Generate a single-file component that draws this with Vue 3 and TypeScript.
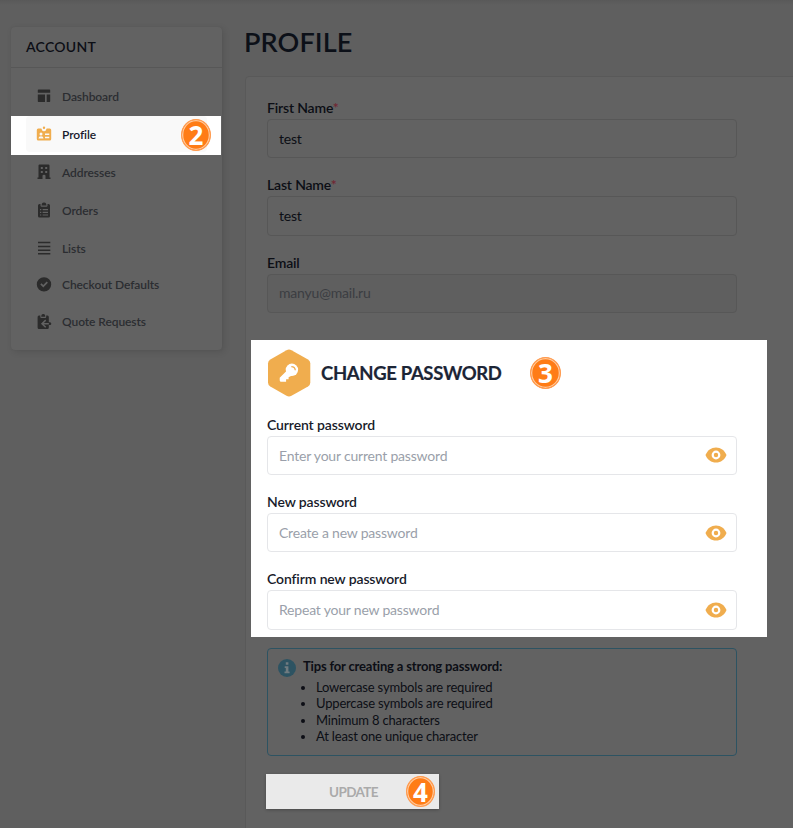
<script setup lang="ts">
interface NavItem { label: string; icon: string; active?: boolean }
interface Field { label: string; value?: string; hint?: string; required?: boolean; disabled?: boolean }

const nav: NavItem[] = [
  { label: 'Dashboard', icon: 'dashboard' },
  { label: 'Profile', icon: 'profile', active: true },
  { label: 'Addresses', icon: 'building' },
  { label: 'Orders', icon: 'orders' },
  { label: 'Lists', icon: 'lists' },
  { label: 'Checkout Defaults', icon: 'check' },
  { label: 'Quote Requests', icon: 'quote' },
]
const details: Field[] = [
  { label: 'First Name', value: 'test', required: true },
  { label: 'Last Name', value: 'test', required: true },
  { label: 'Email', value: 'manyu@mail.ru', disabled: true },
]
const passwords: Field[] = [
  { label: 'Current password', hint: 'Enter your current password' },
  { label: 'New password', hint: 'Create a new password' },
  { label: 'Confirm new password', hint: 'Repeat your new password' },
]
const tips: string[] = [
  'Lowercase symbols are required',
  'Uppercase symbols are required',
  'Minimum 8 characters',
  'At least one unique character',
]
</script>

<template>
  <div class="page">
    <aside class="sidebar">
      <h2 class="side-title">ACCOUNT</h2>
      <nav class="nav">
        <div v-for="item in nav" :key="item.label" class="nav-item" :class="[{ active: item.active }, item.icon]">
          <div class="nav-inner">
            <svg class="nav-icon" viewBox="0 0 16 16" width="16" height="16" fill="currentColor">
              <path v-if="item.icon === 'dashboard'" d="M2.500 1.500h11a.7.7 0 0 1 .7.7v2.500H1.800V2.200a.7.7 0 0 1 .7-.7zM1.800 6.500h7.200v7.500H2.500a.7.7 0 0 1-.7-.7zM10.700 6.500h3.500v6.800a.7.7 0 0 1-.7.7h-2.800z" />
              <path v-else-if="item.icon === 'profile'" fill-rule="evenodd" d="M2.200 2.500H5.300Q6 5.200 8 5.200Q10 5.200 10.700 2.500H13.800Q15.200 2.500 15.200 4V13Q15.200 14.500 13.800 14.500H2.200Q.8 14.500 .8 13V4Q.8 2.500 2.200 2.500zM5 6.500a1.500 1.500 0 1 0 0 3a1.500 1.500 0 1 0 0-3zM2.500 12.500H7.500Q7.500 10.300 5 10.300T2.500 12.500zM9 7.500V9H13.300V7.500zM9 10.800V12.300H13.300V10.800zM8 .5a1.200 1.200 0 1 1 0 2.400A1.200 1.200 0 1 1 8 .5z" />
              <path v-else-if="item.icon === 'building'" fill-rule="evenodd" d="M3.600 .5H12.400Q13.500 .5 13.500 1.600V13.500H14.500V15H9.500V11.800Q9.500 10.800 8 10.800T6.500 11.800V15H1.500V13.500H2.500V1.600Q2.500 .5 3.600 .5zM4.800 3V5H6.800V3zM9.200 3V5H11.200V3zM4.800 7V9H6.800V7zM9.200 7V9H11.200V7z" />
              <path v-else-if="item.icon === 'orders'" fill-rule="evenodd" d="M3.500 2H4.500V3.500Q4.500 4.700 5.700 4.700H10.300Q11.500 4.700 11.500 3.500V2H12.500Q14 2 14 3.500V14Q14 15.500 12.500 15.500H3.500Q2 15.500 2 14V3.500Q2 2 3.500 2zM6 1.500Q6.500 .5 8 .5T10 1.500L10.500 3.500H5.500zM4 7V8.200H5.300V7zM6.600 7V8.200H12V7zM4 9.700V10.900H5.300V9.700zM6.600 9.700V10.900H12V9.700zM4 12.400V13.600H5.300V12.400zM6.600 12.400V13.600H12V12.400z" />
              <path v-else-if="item.icon === 'lists'" d="M2 1.800h12.300v1.500H2zM2 5.700h12.300v1.500H2zM2 9.400h12.300v1.500H2zM2 13.100h12.300v1.500H2z" />
              <path v-else-if="item.icon === 'check'" fill-rule="evenodd" d="M8 .2a7.200 7.200 0 1 0 0 14.400A7.200 7.200 0 1 0 8 .2zM4.300 7.400L5.500 6.200L7.300 8L10.700 4.600L11.900 5.800L7.300 10.400z" />
              <template v-else>
                <path d="M3 1.500H4.300V3Q4.300 4 5.300 4H9.200Q10.200 4 10.200 3V1.500H11.500Q12.800 1.500 12.800 3V13.500Q12.800 15 11.500 15H3Q1.600 15 1.600 13.500V3Q1.600 1.500 3 1.500zM5.500 1Q6 0 7.300 0T9 1L9.300 2.800H5.200zM12.800 8.300H14Q15.300 8.500 15.300 9.700T14 11H12.800z" />
                <path d="M9.700 6.100L6 9.700L9.700 13.300M6 9.700H12.900" class="cut" />
              </template>
            </svg>
            <span>{{ item.label }}</span>
          </div>
          <span v-if="item.active" class="step">2</span>
        </div>
      </nav>
    </aside>

    <main class="main">
      <h1 class="title">PROFILE</h1>
      <div class="card">
        <div v-for="f in details" :key="f.label" class="field">
          <label class="label">{{ f.label }}<span v-if="f.required" class="req">*</span></label>
          <div class="input" :class="{ disabled: f.disabled }">{{ f.value }}</div>
        </div>

        <section class="password">
          <header class="pw-head">
            <svg width="44" height="48" viewBox="0 0 44 48">
              <path class="gold" d="M19.500 1.200Q22-.1 24.500 1.200L41 10.500Q43.300 12 43.300 14.500V33.500Q43.300 36 41 37.500L24.500 46.800Q22 48.100 19.500 46.800L3.300 37.500Q1 36 1 33.500V14.500Q1 12 3.300 10.500Z" />
              <circle cx="24.900" cy="20.800" r="6.200" fill="#fff" />
              <path d="M20 21.500L25 26.500L21.600 28.200V30.300H19.100V32.800H14.200Q12.700 32.800 12.700 31.300V28.700Z" fill="#fff" />
              <path d="M24.300 17.600Q28 17.600 28.300 21.300" class="key-shine" />
            </svg>
            <h2 class="pw-title">CHANGE PASSWORD</h2>
            <span class="step">3</span>
          </header>
          <div v-for="f in passwords" :key="f.label" class="field">
            <label class="label">{{ f.label }}</label>
            <div class="input secret">
              <span>{{ f.hint }}</span>
              <svg width="22" height="16" viewBox="0 0 22 16">
                <path class="gold" d="M.5 8C2.400 3.200 6.200.4 11 .4S19.600 3.200 21.500 8C19.600 12.800 15.800 15.600 11 15.600S2.400 12.800.5 8z" />
                <circle cx="11" cy="8" r="3.300" fill="none" stroke="#fff" stroke-width="2.200" />
              </svg>
            </div>
          </div>
        </section>

        <section class="tips">
          <svg width="18" height="18" viewBox="0 0 18 18">
            <circle cx="9" cy="9" r="9" fill="#2d5362" />
            <path d="M7.800 3.200h2.600v2.600H7.800zM6.700 7.200h3.700v5.200h1.200v1.800H6.500v-1.800h1.300V9H6.700z" fill="#707b80" />
          </svg>
          <div>
            <h3 class="tips-title">Tips for creating a strong password:</h3>
            <ul class="tips-list">
              <li v-for="t in tips" :key="t">{{ t }}</li>
            </ul>
          </div>
        </section>

        <button class="update" type="button"><span>UPDATE</span><span class="step">4</span></button>
      </div>
    </main>
  </div>
</template>

<style>
body { margin: 0; background: #5f5f5f; }
</style>

<style scoped>
.page {
  box-sizing: border-box;
  width: 793px;
  height: 828px;
  overflow: hidden;
  display: flex;
  align-items: flex-start;
  padding-left: 11px;
  background: linear-gradient(#595959, #5f5f5f 5px);
  font-family: Lato, "Liberation Sans", sans-serif;
  color: #0c0e15;
}
h1, h2, h3 { margin: 0; }
.sidebar {
  box-sizing: border-box;
  width: 211px;
  height: 323px;
  margin-top: 27px;
  flex: none;
  background: #626262;
  border-radius: 4px;
  box-shadow: 0 0 1px #555, 2px 2px 7px rgba(0, 0, 0, .12);
}
.side-title {
  height: 40px;
  padding-left: 15px;
  line-height: 39px;
  font-size: 14px;
  font-weight: 600;
  letter-spacing: .25px;
  border-bottom: 1px solid #575757;
}
.nav { padding-top: 10px; }
.nav-item {
  position: relative;
  height: 38px;
  box-sizing: border-box;
  color: #2b2d31;
  font-size: 12px;
  font-weight: 600;
  letter-spacing: -.08px;
}
.nav-inner { height: 36px; padding-left: 25px; display: flex; align-items: center; gap: 10px; }
.nav-item.check, .nav-item.quote { height: 37px; }
.nav-item.check .nav-inner { height: 33px; }
.nav-item.quote .nav-inner { height: 33px; }
.nav-item.active { width: 210px; height: 39px; margin-bottom: -1px; background: #fff; color: #181a2c; }
.active .nav-inner { width: 171px; height: 36px; margin-left: 15px; padding-left: 10px; background: #f9f9f9; border-radius: 4px; box-sizing: content-box; }
.nav-icon { color: #2b2b2b; flex: none; }
.active .nav-icon { color: #f0ad4e; }
.cut { stroke: #626262; stroke-width: 1.5; fill: none; }

.step {
  box-sizing: border-box;
  display: flex;
  align-items: center;
  justify-content: center;
  width: 31px;
  height: 32px;
  flex: none;
  border: 1px solid #ff9b50;
  border-radius: 50%;
  background: #ff7c16;
  box-shadow: inset 0 0 0 1.3px #ffc99c;
  color: #fff;
  font: 700 26px/1 "Open Sans", sans-serif;
  font-stretch: 88%;
  letter-spacing: 0;
}
.active .step { position: absolute; left: 170px; top: 3px; width: 30px; }

.main { margin-left: 23px; flex: none; }
.title { height: 76px; padding-top: 8px; box-sizing: border-box; line-height: 67px; font-size: 27px; font-weight: 600; letter-spacing: .1px; text-indent: -1px; color: #0c1018; }
.card {
  box-sizing: border-box;
  width: 700px;
  height: 900px;
  padding: 22px 0 0 21px;
  background: #626262;
  border: 1px solid #595959;
  border-radius: 4px;
}
.field { height: 77.33px; }
.label { display: block; height: 20px; line-height: 18px; font-size: 14px; font-weight: 600; letter-spacing: -.17px; }
.password .label { line-height: 18.600px; letter-spacing: -.12px; }
.req { color: #712632; }
.input {
  box-sizing: border-box;
  width: 470px;
  height: 39.33px;
  padding: 0 11px;
  border: 1px solid #575757;
  border-radius: 4px;
  font-size: 14px;
  line-height: 37px;
  letter-spacing: -.2px;
}
.disabled { background: #5f5f5f; color: #3b3d42; line-height: 36px; }
.password {
  box-sizing: border-box;
  width: 516px;
  height: 297px;
  margin: 9px 0 0 -16px;
  padding: 9px 16px 0;
  background: #fff;
  color: #181b2a;
}
.pw-head { display: flex; align-items: center; height: 48px; margin-bottom: 18.7px; }
.pw-title { width: 209px; margin-left: 10px; font-size: 18.5px; font-weight: 700; letter-spacing: -.35px; -webkit-text-stroke: .2px #1c2536; color: #1c2536; }
.gold { fill: #f0ad4e; }
.key-shine { fill: none; stroke: #f0ad4e; stroke-width: 1.3; }
.secret { display: flex; align-items: center; justify-content: space-between; padding-right: 9px; border-color: #e5e6e9; color: #9a9faa; }
.tips {
  box-sizing: border-box;
  width: 470px;
  height: 108px;
  margin-top: 11px;
  padding: 10px;
  display: flex;
  gap: 7px;
  border: 1px solid #2d5362;
  border-radius: 4px;
}
.tips-title { margin-top: -2px; line-height: 18px; font-size: 13px; font-weight: 700; letter-spacing: -.17px; }
.tips-list { margin: 4px 0 0; padding-left: 13px; font-size: 13px; line-height: 16.4px; letter-spacing: -.18px; }
.update {
  box-sizing: border-box;
  width: 173px;
  height: 35px;
  margin: 18px 0 0 -1px;
  padding: 1px 4px 0 63px;
  display: flex;
  align-items: center;
  justify-content: space-between;
  border: 0;
  background: #eaeaea;
  color: #aaa;
  font: 700 13.5px Lato, sans-serif;
  letter-spacing: -.6px;
  box-shadow: 0 1px 3px rgba(0, 0, 0, .25);
}
.update .step { width: 29px; height: 31px; }
</style>
